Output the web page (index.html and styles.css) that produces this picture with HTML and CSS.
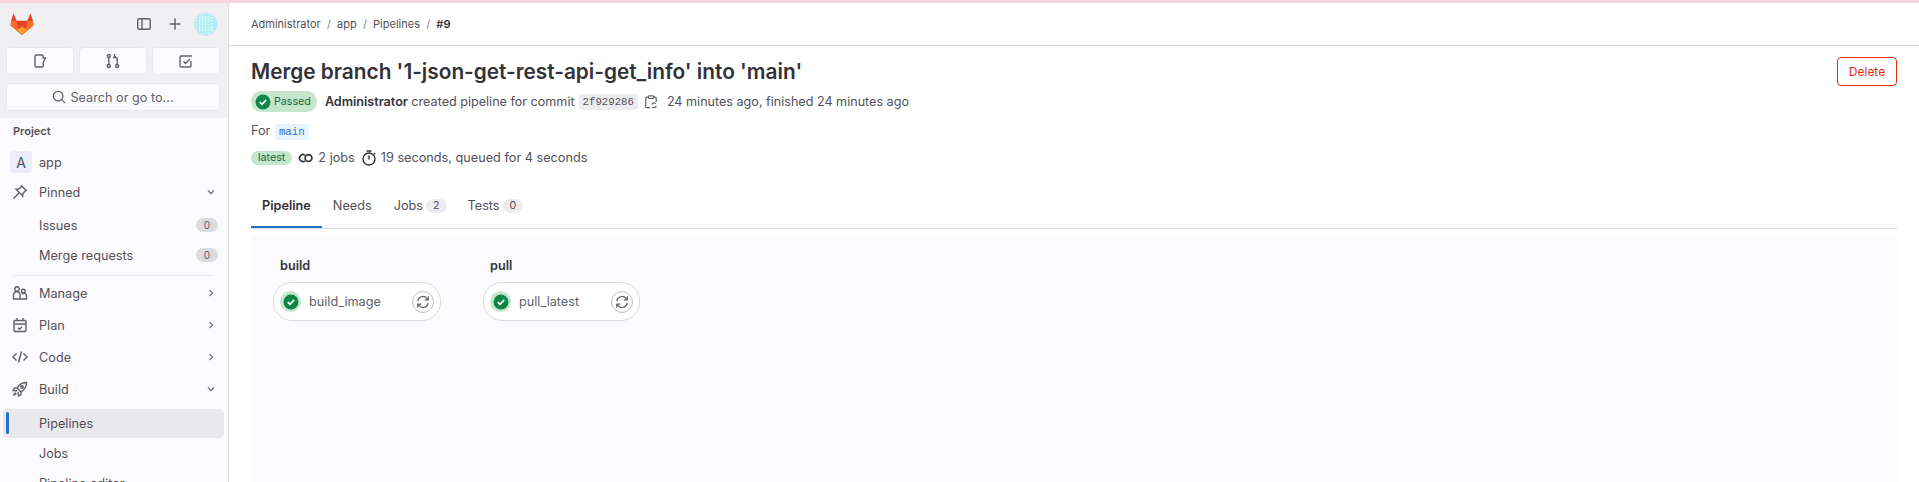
FILE: index.html
```html
<!DOCTYPE html>
<html lang="en">
<head>
    <meta charset="UTF-8">
    <title>Pipeline #9</title>
    <link rel="stylesheet" href="styles.css">
</head>
<body>

<div class="top-stripe"></div>

<div class="layout">
    <aside class="sidebar">
        <div class="user-bar">
            <div class="user-bar-top">
                <svg class="logo" width="24" height="24" viewBox="0 0 24 24">
                    <path d="M1 9 3.6 1.2 6.6 8.8H17.4L20.4 1.2 23 9 23.4 13.5 12 23 .6 13.5Z" fill="#e24329"/>
                    <path d="M23.4 13.5 23 9 17.4 8.8 15.8 17.8 12 23Z" fill="#fc6d26"/>
                    <path d="M.6 13.5 1 9 6.6 8.8 8.2 17.8 12 23Z" fill="#fc6d26"/>
                    <path d="M7.5 17.8 12 14.6 16.5 17.8 12 23Z" fill="#fca326"/>
                </svg>
                <div class="user-bar-actions">
                    <svg class="icon" width="16" height="16" viewBox="0 0 16 16"><rect x="1.75" y="2.75" width="12.5" height="10.5" rx="1.5"/><path d="M6 3v10"/></svg>
                    <svg class="icon" width="16" height="16" viewBox="0 0 16 16"><path d="M8 2.5v11M2.5 8h11"/></svg>
                    <svg class="avatar" width="24" height="24" viewBox="0 0 24 24">
                        <circle cx="12" cy="12" r="11.5" fill="#a9ecf4"/>
                        <path d="M2 6h20M2 9h20M2 12h20M2 15h20M2 18h20M6 2v20M9 1v22M12 1v22M15 1v22M18 2v20" stroke="#eefbfd" stroke-width="1.1" stroke-dasharray="1.4 1.4"/>
                        <circle cx="12" cy="12" r="11.5" fill="none" stroke="#e4e4e8"/>
                    </svg>
                </div>
            </div>
            <div class="counts">
                <a class="count-btn"><svg class="icon" width="16" height="16" viewBox="0 0 16 16"><path d="M11.2 5V3.2A1.2 1.2 0 0 0 10 2H4.2A1.2 1.2 0 0 0 3 3.2v9.6A1.2 1.2 0 0 0 4.2 14H10a1.2 1.2 0 0 0 1.2-1.2V9.5L13.5 5Z"/></svg></a>
                <a class="count-btn"><svg class="icon" width="16" height="16" viewBox="0 0 16 16"><circle cx="3.8" cy="3" r="1.5"/><circle cx="3.8" cy="13" r="1.5"/><circle cx="12.2" cy="13" r="1.5"/><path d="M3.8 4.5v7M12.2 11.5V5.5L9.5 3M9.5 1v3.5H8"/></svg></a>
                <a class="count-btn"><svg class="icon" width="16" height="16" viewBox="0 0 16 16"><path d="M14 3H3.2A1.2 1.2 0 0 0 2 4.2v8.6A1.2 1.2 0 0 0 3.2 14h8.6a1.2 1.2 0 0 0 1.2-1.2V8"/><path d="M5.5 8.5 7.5 10.5 12 6"/></svg></a>
            </div>
            <div class="search-btn">
                <svg class="icon" width="14" height="14" viewBox="0 0 16 16"><circle cx="7" cy="7" r="5.5"/><path d="M11 11l4 4"/></svg>
                Search or go to...
            </div>
        </div>

        <div class="nav">
            <div class="nav-title">Project</div>
            <div class="nav-item project"><span class="project-avatar">A</span>app</div>
            <div class="nav-item section pinned">
                <svg class="icon nav-icon" width="16" height="16" viewBox="0 0 16 16"><path d="M9.5 1.8 14.2 6.500 12.800 7.200 10.800 9.800 10.800 12 4 5.200 6.200 5.200 8.800 3.200ZM6.800 9.200 1.500 14.500"/></svg>
                Pinned
                <svg class="chevron" width="12" height="12" viewBox="0 0 12 12"><path d="M3 4.500 6 7.500 9 4.500"/></svg>
            </div>
            <div class="nav-item sub">Issues<span class="nav-count">0</span></div>
            <div class="nav-item sub">Merge requests<span class="nav-count">0</span></div>
            <div class="nav-divider"></div>
            <div class="nav-item section">
                <svg class="icon nav-icon" width="16" height="16" viewBox="0 0 16 16"><circle cx="5" cy="4" r="2.200"/><circle cx="11.300" cy="6" r="1.800"/><path d="M1.500 14V10a3 3 0 0 1 6.500 0v4ZM8 14h6.500v-3a2.600 2.600 0 0 0-4.600-1.800"/></svg>
                Manage
                <svg class="chevron" width="12" height="12" viewBox="0 0 12 12"><path d="M4.500 3 7.500 6 4.500 9"/></svg>
            </div>
            <div class="nav-item section">
                <svg class="icon nav-icon" width="16" height="16" viewBox="0 0 16 16"><rect x="2" y="3.500" width="12" height="11" rx="1"/><path d="M2 7h12M5 1v3M11 1v3M6 10.800l1.500 1.400 2.500-2.500"/></svg>
                Plan
                <svg class="chevron" width="12" height="12" viewBox="0 0 12 12"><path d="M4.500 3 7.500 6 4.500 9"/></svg>
            </div>
            <div class="nav-item section">
                <svg class="icon nav-icon" width="16" height="16" viewBox="0 0 16 16"><path d="M4.500 4.500 1 8l3.500 3.500M11.500 4.500 15 8l-3.500 3.500M9.500 2.500l-3 11"/></svg>
                Code
                <svg class="chevron" width="12" height="12" viewBox="0 0 12 12"><path d="M4.500 3 7.500 6 4.500 9"/></svg>
            </div>
            <div class="nav-item section">
                <svg class="icon nav-icon" width="16" height="16" viewBox="0 0 16 16"><path d="M14.500 1.500C10.500 1.500 7.500 3 5 7L9 11C13 8.500 14.500 5.500 14.500 1.500ZM5 7H2.500L1 9.500 5 10M9 11V13.500L6.500 15 6 11M3.500 11.500 1.500 14.500 4.500 12.500"/><circle cx="10" cy="6" r="1.300"/></svg>
                Build
                <svg class="chevron" width="12" height="12" viewBox="0 0 12 12"><path d="M3 4.500 6 7.500 9 4.500"/></svg>
            </div>
            <div class="nav-item sub current">Pipelines</div>
            <div class="nav-item sub">Jobs</div>
            <div class="nav-item sub">Pipeline editor</div>
        </div>
    </aside>

    <main class="content">
        <div class="breadcrumbs">
            <span>Administrator</span><i>/</i><span>app</span><i>/</i><span>Pipelines</span><i>/</i><b>#9</b>
        </div>

        <div class="page">
            <div class="header">
                <div class="header-info">
                    <h1>Merge branch '1-json-get-rest-api-get_info' into 'main'</h1>
                    <div class="meta-row">
                        <span class="status-badge">
                            <svg class="check" width="16" height="16" viewBox="0 0 16 16"><circle cx="8" cy="8" r="7.500" fill="#108548"/><path d="M4.800 8.200 7 10.300 11.200 5.900" fill="none" stroke="#fff" stroke-width="1.800"/></svg>
                            Passed
                        </span>
                        <span class="meta-text"><b>Administrator</b> created pipeline for commit</span>
                        <code class="sha">2f929286</code>
                        <svg class="icon copy" width="14" height="14" viewBox="0 0 16 16"><path d="M5 2.500H3.200A1.200 1.200 0 0 0 2 3.700v9.600A1.200 1.200 0 0 0 3.200 14.500H7M11 2.500h1.800A1.200 1.200 0 0 1 14 3.700V8"/><rect x="5" y="1" width="6" height="3" rx=".8"/><path d="M9 11a2.500 2.500 0 0 1 4.500-1M14 12.500a2.500 2.500 0 0 1-4.500 1"/></svg>
                        <span class="meta-text">24 minutes ago, finished 24 minutes ago</span>
                    </div>
                    <div class="for-row">For <code class="ref">main</code></div>
                    <div class="badges-row">
                        <span class="latest">latest</span>
                        <span class="stat">
                            <svg class="icon stat-icon" width="16" height="16" viewBox="0 0 16 16"><path d="M7 5.100A3.500 3.500 0 1 0 7 10.900" stroke-width="1.700"/><circle cx="10.500" cy="8" r="3.400" stroke-width="1.700"/></svg>
                            2 jobs
                        </span>
                        <span class="stat">
                            <svg class="icon stat-icon" width="16" height="16" viewBox="0 0 16 16"><circle cx="8" cy="9" r="6"/><path d="M8 5.500V9.500M5.500 1h5M13 3l1.200 1.200"/></svg>
                            19 seconds, queued for 4 seconds
                        </span>
                    </div>
                </div>
                <button class="delete-btn">Delete</button>
            </div>

            <div class="tabs">
                <div class="tab tab-active">Pipeline</div>
                <div class="tab">Needs</div>
                <div class="tab tab-jobs">Jobs<span class="tab-count">2</span></div>
                <div class="tab">Tests<span class="tab-count">0</span></div>
            </div>

            <div class="graph">
                <div class="stage">
                    <div class="stage-name">build</div>
                    <div class="job job-build">
                        <span class="job-status"><svg width="16" height="16" viewBox="0 0 16 16"><circle cx="8" cy="8" r="7.500" fill="#108548"/><path d="M4.800 8.200 7 10.300 11.200 5.900" fill="none" stroke="#fff" stroke-width="1.800"/></svg></span>
                        <span class="job-name">build_image</span>
                        <span class="job-retry"><svg class="icon" width="14" height="14" viewBox="0 0 16 16"><path d="M2 7a6 6 0 0 1 10.500-3.200L14 5.500M14 1.500v4h-4M14 9a6 6 0 0 1-10.500 3.200L2 10.500M2 14.500v-4h4"/></svg></span>
                    </div>
                </div>
                <div class="stage">
                    <div class="stage-name">pull</div>
                    <div class="job job-pull">
                        <span class="job-status"><svg width="16" height="16" viewBox="0 0 16 16"><circle cx="8" cy="8" r="7.500" fill="#108548"/><path d="M4.800 8.200 7 10.300 11.200 5.900" fill="none" stroke="#fff" stroke-width="1.800"/></svg></span>
                        <span class="job-name">pull_latest</span>
                        <span class="job-retry"><svg class="icon" width="14" height="14" viewBox="0 0 16 16"><path d="M2 7a6 6 0 0 1 10.500-3.200L14 5.500M14 1.500v4h-4M14 9a6 6 0 0 1-10.500 3.200L2 10.500M2 14.500v-4h4"/></svg></span>
                    </div>
                </div>
            </div>
        </div>
    </main>
</div>

</body>
</html>
```

FILE: styles.css
```css
html, body {
  margin: 0;
  height: 482px;
  overflow: hidden;
}

body {
  background: #fff;
  color: #3a383f;
  font-family: Inter, "Noto Sans", sans-serif;
  font-size: 14px;
}

code {
  font-family: "Liberation Mono", "DejaVu Sans Mono", monospace;
}

.top-stripe {
  height: 3px;
  background: #f9d5de;
}

.layout {
  display: flex;
  height: 479px;
  overflow: hidden;
}

.icon {
  fill: none;
  stroke: #626168;
  stroke-width: 1.400;
}

/* sidebar */
.sidebar {
  flex: 0 0 228px;
  background: #fbfafd;
  border-right: 1px solid #dcdcde;
  overflow: hidden;
}

.user-bar {
  background: #f0eff2;
  height: 115px;
  padding: 0 8px 0 6px;
  box-sizing: border-box;
}

.user-bar-top {
  display: flex;
  justify-content: space-between;
  align-items: center;
  height: 42px;
  padding: 0 2px 2px 4px;
}

.user-bar-actions {
  display: flex;
  align-items: center;
  gap: 15px;
}

.avatar {
  margin-left: -4px;
}

.counts {
  display: flex;
  gap: 5px;
}

.count-btn {
  flex: 1;
  height: 28px;
  background: #fbfafd;
  border-radius: 4px;
  display: flex;
  align-items: center;
  justify-content: center;
  box-shadow: 0 0 0 1px #e9e8ec inset;
}

.search-btn {
  margin-top: 8px;
  height: 28px;
  background: #fbfafd;
  border-radius: 4px;
  display: flex;
  align-items: center;
  justify-content: center;
  gap: 4px;
  color: #626168;
  font-size: 12.700px;
  box-shadow: 0 0 0 1px #e9e8ec inset;
}

.nav-title {
  font-size: 11px;
  font-weight: 600;
  color: #535158;
  padding: 4px 13px 0;
  height: 26px;
  line-height: 18px;
}

.nav-item {
  display: flex;
  align-items: center;
  height: 32px;
  padding-left: 39px;
  padding-right: 11px;
  color: #535158;
  font-size: 12.700px;
  position: relative;
}

.nav-icon {
  position: absolute;
  left: 12px;
  top: 8px;
}

.chevron {
  margin-left: auto;
}

.chevron {
  fill: none;
  stroke: #737278;
  stroke-width: 1.300;
}

.project {
  padding-left: 10px;
  height: 28px;
}

.pinned {
  margin-bottom: 2px;
}

.project-avatar {
  width: 22px;
  height: 22px;
  border-radius: 4px;
  background: #ececfb;
  display: flex;
  align-items: center;
  justify-content: center;
  font-size: 14px;
  margin-right: 7px;
}

.sub {
  height: 30px;
}

.nav-count {
  margin-left: auto;
  width: 22px;
  height: 14px;
  border-radius: 8px;
  background: #dcdcde;
  color: #626168;
  font-size: 10px;
  line-height: 14px;
  text-align: center;
}

.nav-item.sub .nav-count {
  margin-right: -1px;
}

.nav-divider {
  border-top: 1px solid #e9e8ec;
  margin: 5px 15px 0 13px;
  height: 1px;
}

.current {
  background: #e9e8ec;
  border-radius: 5px;
  margin: 4px 4px 0 3px;
  padding-left: 36px;
  height: 29px;
}

.current::before {
  content: "";
  position: absolute;
  left: 3px;
  top: 3px;
  bottom: 4px;
  width: 3px;
  border-radius: 2px;
  background: #1f75cb;
}

/* main */
.content {
  flex: 1;
  min-width: 0;
}

.breadcrumbs {
  height: 42px;
  border-bottom: 1px solid #dcdcde;
  padding-left: 22px;
  display: flex;
  align-items: center;
  font-size: 11px;
  color: #535158;
}

.breadcrumbs i {
  font-style: normal;
  color: #89888d;
  margin: 0 6.200px;
}

.breadcrumbs b {
  color: #333238;
  font-weight: 600;
}

.page {
  padding: 0 22px;
}

.header {
  display: flex;
  justify-content: space-between;
  align-items: flex-start;
}

h1 {
  margin: 10px 0 0;
  font-size: 20.800px;
  line-height: 32px;
  font-weight: 600;
  color: #333238;
}

.meta-row {
  display: flex;
  align-items: center;
  margin-top: 2.500px;
  height: 22px;
  font-size: 12.600px;
  color: #535158;
}

.status-badge {
  display: flex;
  align-items: center;
  gap: 3px;
  background: #c3e6cd;
  color: #24663b;
  height: 21px;
  border-radius: 11px;
  padding: 0 6px 0 4px;
  font-size: 10.700px;
  margin-right: 8px;
}

.meta-text b {
  font-weight: 600;
  color: #333238;
}

.sha {
  background: #ececef;
  border-radius: 3px;
  font-size: 10.700px;
  padding: 2px 4px;
  margin-left: 4px;
  color: #535158;
}

.copy {
  margin: 0 9px 0 6px;
}

.for-row {
  margin-top: 8px;
  height: 20px;
  line-height: 20px;
  font-size: 12.700px;
  color: #535158;
}

.ref {
  background: #e9f3fc;
  color: #1f75cb;
  border-radius: 3px;
  font-size: 10.700px;
  padding: 2px 4px;
  margin-left: 1px;
}

.badges-row {
  display: flex;
  align-items: center;
  margin-top: 7px;
  height: 20px;
  font-size: 12.700px;
  color: #535158;
}

.latest {
  background: #c3e6cd;
  color: #24663b;
  font-size: 10.700px;
  border-radius: 8px;
  padding: 0 7px;
  line-height: 14px;
  margin-right: 6px;
}

.stat {
  display: flex;
  align-items: center;
  gap: 4px;
  margin-right: 6px;
}

.stat-icon {
  stroke: #333238;
}

.delete-btn {
  margin-top: 11px;
  width: 60px;
  height: 29px;
  background: #fff;
  border: 1px solid #dd2b0e;
  border-radius: 4px;
  color: #dd2b0e;
  font-family: inherit;
  font-size: 12px;
  padding: 0;
}

.tabs {
  display: flex;
  margin-top: 22.500px;
  height: 38px;
  border-bottom: 1px solid #dcdcde;
}

.tab {
  display: flex;
  align-items: center;
  padding: 0 11px 7px;
  font-size: 12.700px;
  color: #535158;
  height: 38px;
  box-sizing: border-box;
}

.tab-jobs {
  padding-right: 10px;
}

.tab-active {
  color: #333238;
  font-weight: 600;
  box-shadow: inset 0 -2px 0 #1f75cb;
}

.tab-count {
  background: #ececef;
  border-radius: 8px;
  font-size: 10.700px;
  line-height: 14px;
  padding: 0 7px;
  margin-left: 3px;
}

.graph {
  margin-top: 7px;
  background: #fbfafd;
  border-radius: 4px 4px 0 0;
  height: 300px;
  display: flex;
  gap: 42px;
  padding: 21px 0 0 22px;
}

.stage-name {
  font-size: 12.700px;
  font-weight: 600;
  color: #333238;
  padding-left: 7px;
  line-height: 18px;
  margin-bottom: 7px;
}

.job {
  display: flex;
  align-items: center;
  height: 37px;
  background: #fff;
  border: 1px solid #dcdcde;
  border-radius: 19px;
  padding: 0 6px;
}

.job-build {
  width: 154px;
}

.job-pull {
  width: 143px;
}

.job-status {
  width: 21px;
  height: 21px;
  border-radius: 50%;
  background: #c3e6cd;
  display: flex;
  align-items: center;
  justify-content: center;
  flex: none;
}

.job-name {
  margin-left: 8px;
  font-size: 12.700px;
  color: #626168;
  flex: 1;
}

.job-retry {
  width: 20px;
  height: 20px;
  border: 1px solid #bfbfc3;
  border-radius: 50%;
  display: flex;
  align-items: center;
  justify-content: center;
  flex: none;
}
```
